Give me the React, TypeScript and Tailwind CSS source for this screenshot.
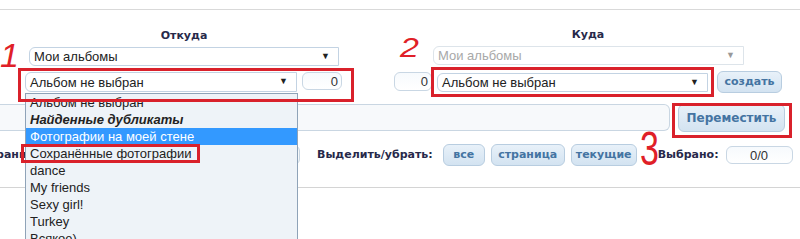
import React from "react";

const sel = "font-['Liberation_Sans',Arial,sans-serif]";
const lab = "font-['DejaVu_Sans',Verdana,sans-serif] font-bold";

function Select({ text, className, disabled }: { text: string; className: string; disabled?: boolean }) {
    return (
        <div
            className={`flex items-center justify-between rounded-l-[6px] border bg-white pl-[4px] pr-[8px] text-[13px] ${sel} ${
                disabled ? "border-[#dde4ea] text-[#a8a8a8]" : "border-[#c3d3e3] text-[#222]"
            } ${className}`}
        >
            <span className="leading-none">{text}</span>
            <span className={`text-[9px] ${disabled ? "text-[#999]" : "text-[#222]"}`}>▼</span>
        </div>
    );
}

function NumBox({ value, className }: { value: string; className: string }) {
    return (
        <div
            className={`flex items-center rounded-[6px] border border-[#c9d7e4] bg-gradient-to-b from-[#f7fafd] to-white text-[13px] leading-none text-[#333] ${sel} ${className}`}
        >
            {value}
        </div>
    );
}

function Btn({ text, className }: { text: string; className: string }) {
    return (
        <div
            className={`flex items-center justify-center rounded-[6px] border border-[#b8cde0] bg-gradient-to-b from-[#e8f1f9] to-[#d3e3f1] text-[11px] text-[#4474a2] ${lab} ${className}`}
        >
            {text}
        </div>
    );
}

const items = [
    { t: "Альбом не выбран" },
    { t: "Найденные дубликаты", b: true },
    { t: "Фотографии на моей стене", h: true },
    { t: "Сохранённые фотографии" },
    { t: "dance" },
    { t: "My friends" },
    { t: "Sexy girl!" },
    { t: "Turkey" },
    { t: "Всякое)" },
];

export default function App() {
    return (
        <div className="relative h-[239px] w-[800px] overflow-hidden bg-white">
            <div className="h-[10px] border-b border-[#d9d9d9]" />

            <div className="flex">
                <div className="ml-[25px] w-[318px]">
                    <div className={`pt-[19px] text-center text-[11px] leading-[14px] text-[#27294a] ${lab}`}>Откуда</div>
                    <Select text="Мои альбомы" className="ml-[4px] mt-[4px] h-[19px] w-[310px]" />
                    <div className="mt-[6px] flex items-start gap-[5px]">
                        <Select text="Альбом не выбран" className="h-[20px] w-[272px]" />
                        <NumBox value="0" className="h-[18px] w-[40px] justify-end pr-[3px]" />
                    </div>
                </div>

                <div className="ml-[51px] w-[388px]">
                    <div className={`pt-[18px] text-center text-[11px] leading-[14px] text-[#27294a] ${lab}`}>Куда</div>
                    <Select text="Мои альбомы" disabled className="ml-[39px] mt-[4px] h-[19px] w-[311px] rounded-none" />
                    <div className="mt-[6px] flex items-start">
                        <NumBox value="0" className="mt-[1px] h-[19px] w-[38px] justify-end pr-[3px]" />
                        <Select text="Альбом не выбран" className="ml-[5px] mt-[2px] h-[19px] w-[271px]" />
                        <Btn text="создать" className="ml-[9px] h-[22px] w-[65px]" />
                    </div>
                </div>
            </div>

            <div className="mt-[11px] flex items-start">
                <div className="h-[27px] w-[670px] rounded-r-[6px] border border-l-0 border-[#c9d6e2] bg-[#f7f9fb]" />
                <Btn text="Переместить" className="ml-[8px] h-[28px] w-[107px] text-[12px] text-[#3f6e99]" />
            </div>

            <div className="mt-[12px] flex h-[22px] items-center">
                <div className="flex w-[300px] items-center">
                    <span className={`ml-[-30px] text-[11px] text-[#27294a] ${lab}`}>Выбрани</span>
                    <div className="ml-[4px] h-[20px] flex-1 rounded-r-[6px] border border-[#c9d6e2] bg-[#f7f9fb]" />
                </div>
                <span className={`ml-[17px] text-[11px] text-[#27294a] ${lab}`}>Выделить/убрать:</span>
                <Btn text="все" className="ml-[10px] h-[22px] w-[42px]" />
                <Btn text="страница" className="ml-[6px] h-[22px] w-[74px]" />
                <Btn text="текущие" className="ml-[6px] h-[22px] w-[66px]" />
                <span className={`ml-[21px] text-[11px] text-[#27294a] ${lab}`}>Выбрано:</span>
                <NumBox value="0/0" className="ml-[7px] h-[18px] w-[67px] justify-center" />
            </div>

            <div className="mt-[21px] border-t border-[#d4d4d4]" />

            {/* открытый список альбомов */}
            <div className={`absolute left-[25px] top-[93px] h-[160px] w-[273px] border border-[#8fa3b8] bg-[#eef3f8] text-[13px] text-[#222] ${sel}`}>
                {items.map((it) => (
                    <div
                        key={it.t}
                        className={`h-[17px] pl-[4px] leading-[17px] ${it.b ? "font-bold italic" : ""} ${
                            it.h ? "bg-[#3399ff] text-white" : ""
                        }`}
                    >
                        {it.t}
                    </div>
                ))}
            </div>

            {/* пометки красным */}
            <div className="absolute left-[18px] top-[68px] h-[34px] w-[336px] border-[3px] border-[#d9212b]" />
            <div className="absolute left-[431px] top-[67px] h-[30px] w-[283px] border-[3px] border-[#d9212b]" />
            <div className="absolute left-[672px] top-[103px] h-[35px] w-[120px] border-[3px] border-[#d9212b]" />
            <div className="absolute left-[21px] top-[144px] h-[19px] w-[179px] border-[3px] border-[#d9212b]" />

            <div className="absolute left-[0px] top-[38px] text-[34px] leading-none text-[#e01f28] font-['Liberation_Sans',sans-serif] italic">1</div>
            <div className="absolute left-[400px] top-[34px] origin-top-left scale-y-[0.8] text-[34px] leading-none text-[#e01f28] font-['Liberation_Sans',sans-serif] italic">2</div>
            <div className="absolute left-[640px] top-[124px] origin-top-left scale-y-[1.4] text-[34px] leading-none text-[#e01f28] font-['Liberation_Sans',sans-serif]">3</div>
        </div>
    );
}
